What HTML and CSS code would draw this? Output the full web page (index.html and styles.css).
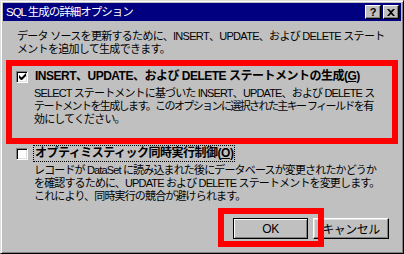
FILE: index.html
```html
<!DOCTYPE html>
<html lang="ja">
<head>
 <meta charset="UTF-8">
 <title>SQL 生成の詳細オプション</title>
 <link rel="stylesheet" href="styles.css">
</head>
<body>
<div class="window">
 <div class="titlebar">
  <span class="title">SQL 生成の詳細オプション</span>
  <div class="caption_buttons">
   <span class="cap_btn">?</span>
   <span class="cap_btn cap_close">
    <svg width="8" height="7" viewBox="0 0 8 7"><path d="M0 0h2l2 2 2-2h2L5 3.5 8 7H6L4 5 2 7H0l3-3.5z" fill="#000"/></svg>
   </span>
  </div>
 </div>
 <div class="content">
  <p class="intro">データ ソースを更新するために、INSERT、UPDATE、および DELETE ステート<br>メントを追加して生成できます。</p>
  <div class="group marked">
   <div class="check_row">
    <span class="checkbox checked">
     <svg width="7" height="7" viewBox="0 0 7 7"><path d="M0 2v3l2 2h1l4-4V0L2.5 4.5z" fill="#000"/></svg>
    </span>
    <span class="label">INSERT、UPDATE、および DELETE ステートメントの生成(<u>G</u>)</span>
   </div>
   <p class="desc">SELECT ステートメントに基づいた INSERT、UPDATE、および DELETE ス<br><span class="tight">テートメントを生成します。このオプションに選択された主キー フィールドを有</span><br>効にしてください。</p>
  </div>
  <div class="group plain">
   <div class="check_row">
    <span class="checkbox"></span>
    <span class="label focus">オプティミスティック同時実行制御(<u>O</u>)</span>
   </div>
   <p class="desc">レコードが DataSet に読み込まれた後にデータベースが変更されたかどうか<br>を確認するために、UPDATE および DELETE ステートメントを変更します。<br>これにより、同時実行の競合が避けられます。</p>
  </div>
  <div class="buttons">
   <div class="ok_mark"><button type="button" class="btn btn_default">OK</button></div>
   <button type="button" class="btn">キャンセル</button>
  </div>
 </div>
</div>
</body>
</html>
```

FILE: styles.css
```css
body{
  margin: 0;
  font-family: "Liberation Sans", "Noto Sans CJK JP", sans-serif;
  font-size: 11px;
  letter-spacing: -0.5px;
  background: #c0c0c0;
}
.window{
  width: 404px;
  height: 254px;
  box-sizing: border-box;
  background: #c0c0c0;
  border: 1px solid;
  border-color: #dfdfdf #000 #000 #dfdfdf;
  box-shadow: inset 1px 1px 0 #fff, inset -1px -1px 0 #808080;
  padding: 2px;
  display: flex;
  flex-direction: column;
  overflow: hidden;
}
.titlebar{
  height: 18px;
  flex: none;
  background: #000080;
  color: #fff;
  display: flex;
  align-items: center;
  justify-content: space-between;
  padding: 0 2px 0 3px;
}
.title{
  line-height: 18px;
  white-space: nowrap;
  font-size: 11.5px;
  letter-spacing: -1px;
}
.caption_buttons{
  display: flex;
  gap: 2px;
}
.cap_btn{
  width: 16px;
  height: 14px;
  box-sizing: border-box;
  background: #c0c0c0;
  color: #000;
  font-family: "Liberation Sans", sans-serif;
  font-weight: bold;
  font-size: 11px;
  letter-spacing: 0;
  line-height: 12px;
  text-align: center;
  border: 1px solid;
  border-color: #fff #000 #000 #fff;
  box-shadow: inset -1px -1px 0 #808080;
  display: flex;
  align-items: center;
  justify-content: center;
}
.content{
  flex: 1;
  padding: 9px 0 0 14px;
  display: flex;
  flex-direction: column;
}
p{
  margin: 0;
  line-height: 13px;
  white-space: nowrap;
  letter-spacing: -0.85px;
}
.tight{
  letter-spacing: -1.6px;
}
.intro{
  margin-bottom: 4px;
  letter-spacing: -0.7px;
}
.group.marked{
  border: 6px solid #f00;
  margin: 0 3px 0 -11px;
  padding: 3px 0 12px 4px;
}
.group.plain{
  margin-left: -1px;
  padding-top: 2px;
}
.check_row{
  display: flex;
  align-items: center;
  gap: 7px;
  height: 15px;
  white-space: nowrap;
}
.checkbox{
  flex: none;
  width: 12px;
  height: 12px;
  box-sizing: border-box;
  background: #fff;
  border: 1px solid;
  border-color: #808080 #fff #fff #808080;
  box-shadow: inset 1px 1px 0 #000, inset -1px -1px 0 #dfdfdf;
  display: flex;
  align-items: center;
  justify-content: center;
}
.label{
  font-weight: bold;
  font-size: 12px;
  line-height: 13px;
}
.label.focus{
  outline: 1px dotted #000;
  outline-offset: 1px;
}
.desc{
  padding-left: 18px;
  margin-top: 3px;
}
.buttons{
  margin-top: auto;
  display: flex;
  justify-content: flex-end;
  align-items: flex-start;
  padding: 0 12px 4px 0;
}
.ok_mark{
  position: relative;
  z-index: 1;
  border: 6px solid #f00;
  padding: 4px 10px 2px 9px;
  margin-right: -11px;
}
.btn{
  display: block;
  width: 75px;
  height: 21px;
  box-sizing: border-box;
  background: #c0c0c0;
  font-family: inherit;
  font-size: 12px;
  letter-spacing: inherit;
  color: #000;
  padding: 0;
  border: 1px solid;
  border-color: #fff #000 #000 #fff;
  box-shadow: inset -1px -1px 0 #808080, inset 1px 1px 0 #dfdfdf;
}
.buttons > .btn{
  width: 76px;
  margin-top: 10px;
}
.btn_default{
  border-color: #000;
  box-shadow: inset 1px 1px 0 #fff, inset -1px -1px 0 #808080;
}
```
